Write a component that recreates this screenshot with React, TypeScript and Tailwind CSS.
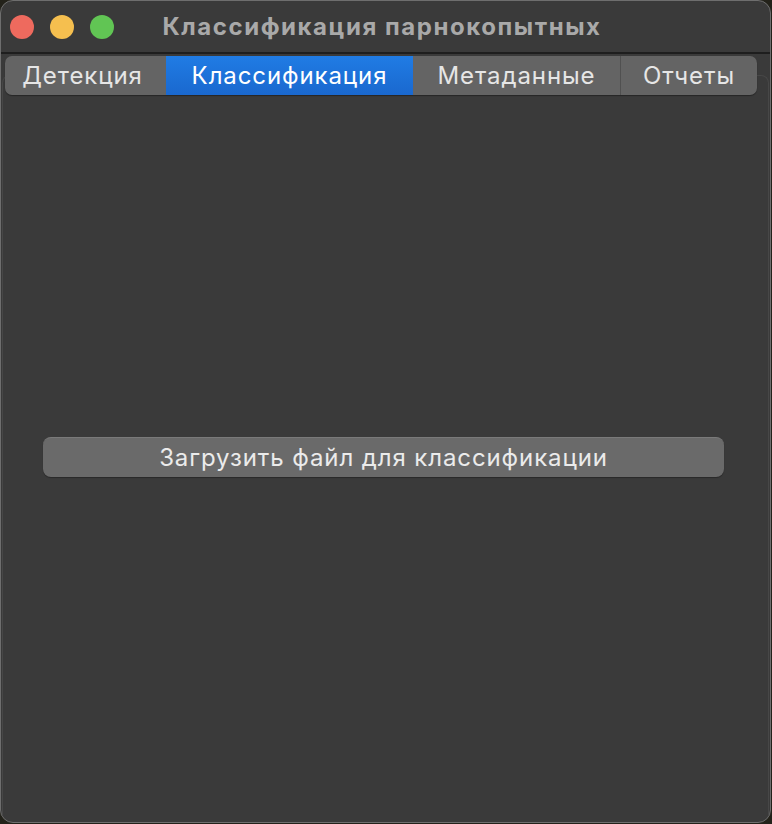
import React from "react";

const tabs = [
  { label: "Детекция", width: "w-[161px]" },
  { label: "Классификация", width: "w-[247px]", active: true },
  { label: "Метаданные", width: "w-[207px]" },
  { label: "Отчеты", width: "w-[137px]" },
];

export default function App() {
  return (
    <div
      className="w-[772px] h-[824px] bg-[#23221a] overflow-hidden"
      style={{ fontFamily: "Inter, 'Noto Sans', sans-serif" }}
    >
      <div className="w-[771px] h-[823px] rounded-[13px] bg-[#3a3a3a] border border-[#6e6e6e] flex flex-col overflow-hidden">
        {/* title bar */}
        <div className="relative h-[53px] shrink-0 flex items-center pl-[9px] border-b-2 border-[#1e1e1e]">
          <div className="flex gap-[16px]">
            <span className="w-[24px] h-[24px] rounded-full bg-[#ee6a5e]" />
            <span className="w-[24px] h-[24px] rounded-full bg-[#f5bf4f]" />
            <span className="w-[24px] h-[24px] rounded-full bg-[#61c554]" />
          </div>
          <div className="absolute inset-0 flex items-center justify-center pr-[7px] text-[24px] font-bold text-[#a9a9a9] tracking-[1.55px]">
            Классификация парнокопытных
          </div>
        </div>

        {/* tab widget */}
        <div className="flex-1 flex flex-col pt-[2px]">
          <div className="relative z-10 flex ml-[4px] h-[39px] w-[752px] rounded-[7px] overflow-hidden bg-[#646464] shadow-[0_1px_1px_rgba(0,0,0,0.35)]">
            {tabs.map((t, i) => (
              <div
                key={t.label}
                className={`${t.width} h-full flex items-center justify-center text-[24px] tracking-[0.9px] ${
                  t.active
                    ? "bg-gradient-to-b from-[#207ce4] to-[#1a68cf] text-white"
                    : "text-[#e6e6e6]"
                } ${i === 0 ? "pr-[6px]" : ""} ${i === 3 ? "border-l border-[#505050]" : ""}`}
              >
                {t.label}
              </div>
            ))}
          </div>
          <div className="flex-1 -mt-[20px] ml-[1px] mr-[1px] rounded-t-[8px] border border-b-0 border-[#474747] flex flex-col">
            <div className="h-[361px]" />
            <button className="ml-[40px] w-[681px] h-[40px] rounded-[8px] bg-[#6a6a6a] border-t border-[#7a7a7a] shadow-[0_1px_1px_rgba(0,0,0,0.3)] text-[24px] tracking-[0.9px] text-[#ebebeb] flex items-center justify-center">
              Загрузить файл для классификации
            </button>
          </div>
        </div>
      </div>
    </div>
  );
}
